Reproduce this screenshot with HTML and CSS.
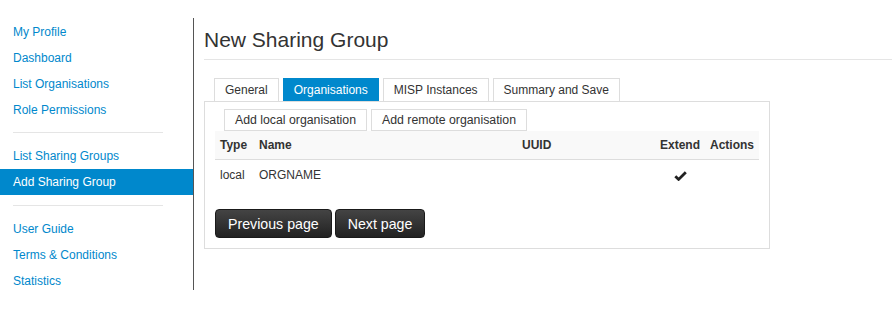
FILE: index.html
```html
<!DOCTYPE html>
<html lang="en">
<head>
    <meta charset="UTF-8">
    <title>New Sharing Group</title>
    <link rel="stylesheet" href="styles.css">
</head>
<body>
    <!-- Side menu -->
    <div class="side-menu">
        <a href="#">My Profile</a>
        <a href="#">Dashboard</a>
        <a href="#">List Organisations</a>
        <a href="#">Role Permissions</a>
        <div class="divider"></div>
        <a href="#">List Sharing Groups</a>
        <a href="#" class="active">Add Sharing Group</a>
        <div class="divider lower"></div>
        <a href="#">User Guide</a>
        <a href="#">Terms &amp; Conditions</a>
        <a href="#">Statistics</a>
    </div>

    <!-- Main Content -->
    <div class="main">
        <h2>New Sharing Group</h2>

        <div class="tabs">
            <span class="tab">General</span>
            <span class="tab active">Organisations</span>
            <span class="tab">MISP Instances</span>
            <span class="tab">Summary and Save</span>
        </div>

        <div class="tab-box">
            <div class="sub-tabs">
                <span class="tab">Add local organisation</span>
                <span class="tab">Add remote organisation</span>
            </div>

            <table class="org-table">
                <tr>
                    <th class="col-type">Type</th>
                    <th class="col-name">Name</th>
                    <th class="col-uuid">UUID</th>
                    <th class="col-extend">Extend</th>
                    <th class="col-actions">Actions</th>
                </tr>
                <tr>
                    <td>local</td>
                    <td>ORGNAME</td>
                    <td></td>
                    <td class="center">
                        <svg width="13" height="10" viewBox="0 0 13 10"><polyline points="1.3,5.2 4.6,8.4 11.8,1.2" fill="none" stroke="#222" stroke-width="2.8"/></svg>
                    </td>
                    <td></td>
                </tr>
            </table>

            <div class="pager">
                <button>Previous page</button>
                <button>Next page</button>
            </div>
        </div>
    </div>
</body>
</html>
```

FILE: styles.css
```css
body {
    margin: 0;
    padding: 0;
    display: flex;
    align-items: flex-start;
    font-family: "Liberation Sans", Arial, sans-serif;
    font-size: 12px;
    color: #333;
    background: white;
}

/* Side menu */
.side-menu {
    width: 193px;
    height: 271px;
    margin-top: 18px;
    padding-top: 1px;
    border-right: 1px solid #555;
    display: flex;
    flex-direction: column;
}

.side-menu a {
    display: block;
    flex: none;
    height: 26px;
    line-height: 26px;
    padding-left: 13px;
    color: #0088cc;
    text-decoration: none;
}

.side-menu a.active {
    background-color: #0088cc;
    color: white;
}

.side-menu .divider {
    flex: none;
    height: 1px;
    margin: 9px 30px 10px 13px;
    background: #e5e5e5;
}

.side-menu .divider.lower {
    margin: 10px 30px 10px 13px;
}

.main {
    flex: 1;
    padding-left: 10px;
}

.main h2 {
    margin: 0;
    padding: 28px 0 7px;
    font-size: 21px;
    line-height: 24px;
    font-weight: normal;
    color: #333;
    border-bottom: 1px solid #e5e5e5;
}

/* Tabs */
.tabs, .sub-tabs {
    display: flex;
    gap: 4px;
    margin-left: 10px;
}

.tabs {
    margin-top: 18px;
}

.tab {
    display: block;
    padding: 0 10px;
    line-height: 21px;
    border: 1px solid #ddd;
    color: #333;
    background: white;
}

.tabs .tab {
    border-bottom: none;
    line-height: 22px;
}

.tab.active {
    background: #0088cc;
    border-color: #0088cc;
    color: white;
}

.tab-box {
    width: 544px;
    padding: 7px 10px 10px;
    border: 1px solid #ddd;
}

.sub-tabs {
    margin-left: 9px;
}

.sub-tabs .tab {
    font-size: 12.3px;
    line-height: 20px;
}

/* Table */
.org-table {
    width: 544px;
    border-collapse: collapse;
    table-layout: fixed;
}

.org-table th {
    background: #f9f9f9;
    font-weight: bold;
    text-align: left;
    border-bottom: 1px solid #ddd;
    padding: 6px 5px;
}

.org-table th, .org-table td {
    line-height: 16px;
    height: 16px;
}

.org-table td {
    padding: 7px 5px 6px;
}

.col-type { width: 29px; }
.col-name { width: 253px; }
.col-uuid { width: 128px; }
.col-extend { width: 40px; }
.col-actions { width: 44px; }

.center {
    text-align: center;
}

.center svg {
    vertical-align: middle;
}

/* Pager buttons */
.pager {
    display: flex;
    gap: 3px;
    margin-top: 20px;
}

.pager button {
    height: 29px;
    padding: 0 12px;
    font-family: "Liberation Sans", Arial, sans-serif;
    font-size: 14.2px;
    color: white;
    background: linear-gradient(#444, #222);
    border: 1px solid #1a1a1a;
    border-radius: 4px;
}
```
